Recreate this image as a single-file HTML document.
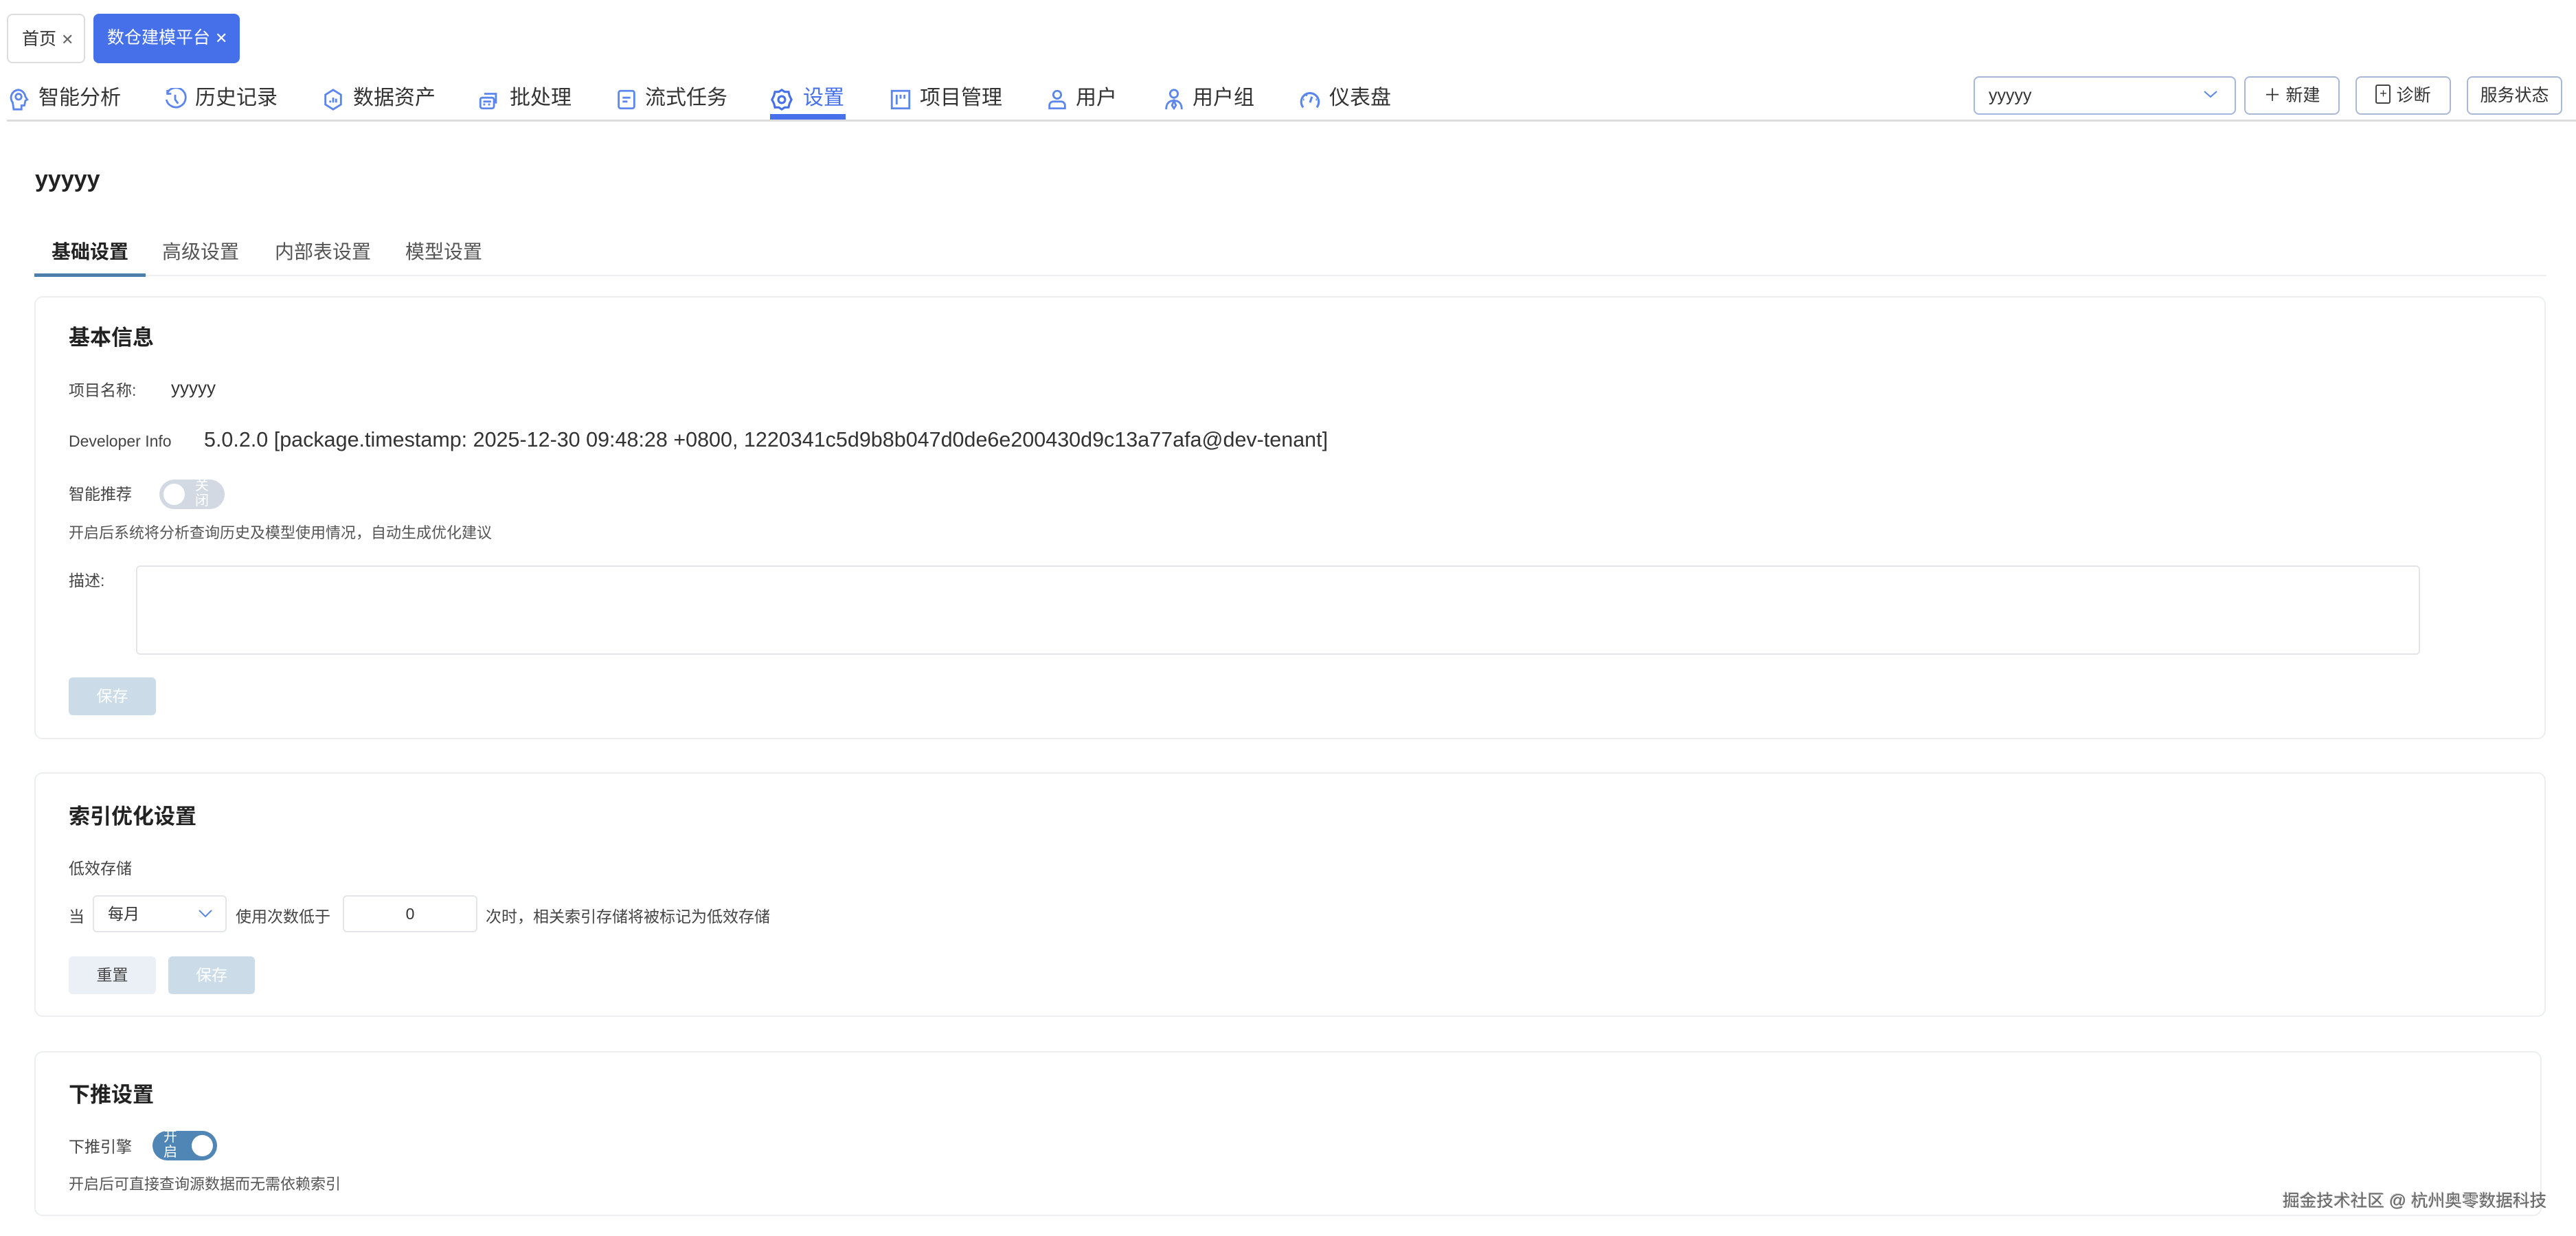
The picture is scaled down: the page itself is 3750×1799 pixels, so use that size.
<!DOCTYPE html>
<html><head><meta charset="utf-8"><style>
*{box-sizing:border-box;margin:0;padding:0}
body{width:3750px;height:1799px;background:#fff;font-family:"Liberation Sans","Noto Sans CJK SC",sans-serif;color:#333;position:relative;overflow:hidden}
.abs{position:absolute}
.tab{position:absolute;top:20px;height:72px;border-radius:8px;font-size:25px;line-height:70px;padding-left:20px}
.nav{position:absolute;top:125px;font-size:30px;color:#333;line-height:36px;white-space:nowrap}
.ic{position:absolute;top:128px;width:34px;height:34px}
.btn{position:absolute;top:111px;height:56px;border:2px solid #a9b8d8;border-radius:8px;font-size:25px;line-height:52px;text-align:center;color:#333}
.card{position:absolute;left:50px;width:3656px;border:2px solid #eceef0;border-radius:12px}
.h{position:absolute;left:100px;font-size:31px;font-weight:bold;color:#222}
.t{position:absolute;font-size:23px;color:#444;white-space:nowrap}
</style></head><body>
<div class="tab" style="left:10px;width:114px;border:2px solid #ddd;color:#333">首页 <span style="font-size:22px;color:#666">✕</span></div>
<div class="tab" style="left:136px;width:213px;background:#4570ea;color:#fff">数仓建模平台 <span style="font-size:22px">✕</span></div>

<svg class="ic" style="left:10px" viewBox="0 0 24 24" fill="none" stroke="#5b86ee" stroke-width="2"><path d="M12 2a8 8 0 0 0-6 13l1 7h8v-4h3l1-5 2-1-2-3A8 8 0 0 0 12 2z"/><circle cx="12" cy="9" r="3"/></svg>
<div class="nav" style="left:56px">智能分析</div>
<svg class="ic" style="left:238px" viewBox="0 0 24 24" fill="none" stroke="#5b86ee" stroke-width="2"><path d="M4 5a10 10 0 1 1-1 7"/><path d="M4 2v4h4M12 7v5l3 4"/></svg>
<div class="nav" style="left:284px">历史记录</div>
<svg class="ic" style="left:468px" viewBox="0 0 24 24" fill="none" stroke="#5b86ee" stroke-width="2"><path d="M12 2l8 5v10l-8 5-8-5V7z"/><path d="M9 15v-2M12 15v-5M15 15v-4"/></svg>
<div class="nav" style="left:514px">数据资产</div>
<svg class="ic" style="left:695px" viewBox="0 0 24 24" fill="none" stroke="#5b86ee" stroke-width="2"><rect x="3" y="10" width="14" height="11" rx="2"/><path d="M7 6h12v10M6 14h8M6 17h2M11 17h2"/></svg>
<div class="nav" style="left:742px">批处理</div>
<svg class="ic" style="left:895px" viewBox="0 0 24 24" fill="none" stroke="#5b86ee" stroke-width="2"><rect x="4" y="3" width="16" height="18" rx="2"/><path d="M8 10h8M8 14h5"/></svg>
<div class="nav" style="left:939px">流式任务</div>
<svg class="ic" style="left:1121px" viewBox="0 0 24 24" fill="none" stroke="#4570ea" stroke-width="2.2"><path d="M12 2l3 2 4 0 1 4 2 4-2 4-1 4-4 0-3 2-3-2-4 0-1-4-2-4 2-4 1-4 4 0z"/><circle cx="12" cy="12" r="3.5"/></svg>
<div class="nav" style="left:1169px;color:#4570ea">设置</div>
<svg class="ic" style="left:1294px" viewBox="0 0 24 24" fill="none" stroke="#5b86ee" stroke-width="2"><rect x="3" y="3" width="18" height="18"/><path d="M8 7v10M12 7v4M16 7v4"/></svg>
<div class="nav" style="left:1339px">项目管理</div>
<svg class="ic" style="left:1522px" viewBox="0 0 24 24" fill="none" stroke="#5b86ee" stroke-width="2"><circle cx="12" cy="7" r="4"/><path d="M4 21v-3a4 4 0 0 1 4-4h8a4 4 0 0 1 4 4v3z"/></svg>
<div class="nav" style="left:1566px">用户</div>
<svg class="ic" style="left:1692px" viewBox="0 0 24 24" fill="none" stroke="#5b86ee" stroke-width="2"><circle cx="12" cy="6" r="4"/><path d="M4 22c0-6 3-9 8-9s8 3 8 9M12 13l-2 5 2 3 2-3z"/></svg>
<div class="nav" style="left:1736px">用户组</div>
<svg class="ic" style="left:1890px" viewBox="0 0 24 24" fill="none" stroke="#5b86ee" stroke-width="2.2"><path d="M5 20A9 9 0 1 1 19 20"/><path d="M12 15l2-6M5 12h1M18 12h1M8 7l1 1"/></svg>
<div class="nav" style="left:1935px">仪表盘</div>
<div class="abs" style="left:1121px;top:166px;width:110px;height:8px;background:#4570ea"></div>
<div class="abs" style="left:10px;top:174px;width:3740px;height:3px;background:#ddd"></div>

<div class="btn" style="left:2873px;width:382px;text-align:left;padding-left:20px;border-color:#a4b6dc">yyyyy<svg style="position:absolute;right:24px;top:16px" width="22" height="16" viewBox="0 0 22 16"><path d="M2 4l9 8 9-8" fill="none" stroke="#5b86ee" stroke-width="2"/></svg></div>
<div class="btn" style="left:3267px;width:139px">＋ 新建</div>
<div class="btn" style="left:3429px;width:139px"><span style="display:inline-block;width:22px;height:28px;border:2px solid #444;border-radius:3px;vertical-align:middle;margin-right:8px;position:relative;top:-3px;font-size:18px;line-height:22px">+</span>诊断</div>
<div class="btn" style="left:3591px;width:139px">服务状态</div>

<div class="abs" style="left:51px;top:242px;font-size:34px;font-weight:bold;color:#222">yyyyy</div>
<div class="abs" style="left:75px;top:345px;font-size:28px;font-weight:bold;color:#222">基础设置</div>
<div class="abs" style="left:236px;top:345px;font-size:28px;color:#555">高级设置</div>
<div class="abs" style="left:400px;top:345px;font-size:28px;color:#555">内部表设置</div>
<div class="abs" style="left:590px;top:345px;font-size:28px;color:#555">模型设置</div>
<div class="abs" style="left:50px;top:400px;width:3657px;height:2px;background:#eceef0"></div>
<div class="abs" style="left:50px;top:398px;width:162px;height:5px;background:#4d7fac"></div>

<div class="card" style="top:431px;height:645px"></div>
<div class="h" style="top:466px">基本信息</div>
<div class="t" style="left:100px;top:549px">项目名称:</div>
<div class="t" style="left:249px;top:549px;font-size:26px;color:#333">yyyyy</div>
<div class="t" style="left:100px;top:629px">Developer Info</div>
<div class="t" style="left:297px;top:623px;font-size:30.5px;color:#333">5.0.2.0 [package.timestamp: 2025-12-30 09:48:28 +0800, 1220341c5d9b8b047d0de6e200430d9c13a77afa@dev-tenant]</div>
<div class="t" style="left:100px;top:700px">智能推荐</div>
<div class="abs" style="left:232px;top:698px;width:95px;height:43px;border-radius:22px;background:#d3d9e2"><div class="abs" style="left:6px;top:6px;width:31px;height:31px;border-radius:50%;background:#fff"></div><div class="abs" style="left:52px;top:-2px;font-size:20px;line-height:22px;color:#fff;width:20px">关闭</div></div>
<div class="t" style="left:100px;top:758px;font-size:22px;color:#555">开启后系统将分析查询历史及模型使用情况，自动生成优化建议</div>
<div class="t" style="left:100px;top:826px">描述:</div>
<div class="abs" style="left:198px;top:823px;width:3325px;height:130px;border:2px solid #e3e5e8;border-radius:6px"></div>
<div class="abs" style="left:100px;top:986px;width:127px;height:55px;border-radius:6px;background:#cbdce8;color:#fff;font-size:23px;text-align:center;line-height:55px">保存</div>

<div class="card" style="top:1124px;height:356px"></div>
<div class="h" style="top:1163px">索引优化设置</div>
<div class="t" style="left:100px;top:1245px">低效存储</div>
<div class="t" style="left:100px;top:1315px">当</div>
<div class="abs" style="left:135px;top:1303px;width:195px;height:54px;border:2px solid #e3e5e8;border-radius:6px;font-size:23px;line-height:50px;padding-left:20px">每月<svg style="position:absolute;right:18px;top:18px" width="22" height="14" viewBox="0 0 22 14"><path d="M2 2l9 9 9-9" fill="none" stroke="#5b86ee" stroke-width="2"/></svg></div>
<div class="t" style="left:343px;top:1315px">使用次数低于</div>
<div class="abs" style="left:499px;top:1303px;width:196px;height:54px;border:2px solid #e3e5e8;border-radius:6px;font-size:23px;line-height:50px;text-align:center">0</div>
<div class="t" style="left:707px;top:1315px">次时，相关索引存储将被标记为低效存储</div>
<div class="abs" style="left:100px;top:1392px;width:127px;height:55px;border-radius:6px;background:#ebeff6;color:#444;font-size:23px;text-align:center;line-height:55px">重置</div>
<div class="abs" style="left:245px;top:1392px;width:126px;height:55px;border-radius:6px;background:#cbdce8;color:#fff;font-size:23px;text-align:center;line-height:55px">保存</div>

<div class="card" style="top:1530px;height:240px;width:3650px"></div>
<div class="h" style="top:1568px">下推设置</div>
<div class="t" style="left:100px;top:1650px">下推引擎</div>
<div class="abs" style="left:222px;top:1646px;width:94px;height:43px;border-radius:22px;background:#4f86b5"><div class="abs" style="right:6px;top:6px;width:31px;height:31px;border-radius:50%;background:#fff"></div><div class="abs" style="left:16px;top:-2px;font-size:20px;line-height:22px;color:#fff;width:20px">开启</div></div>
<div class="t" style="left:100px;top:1706px;font-size:22px;color:#555">开启后可直接查询源数据而无需依赖索引</div>
<div class="t" style="left:3323px;top:1728px;font-size:24.7px;color:#666;text-shadow:1px 1px 0 #fff,-1px -1px 0 #bbb">掘金技术社区 @ 杭州奥零数据科技</div>
</body></html>
